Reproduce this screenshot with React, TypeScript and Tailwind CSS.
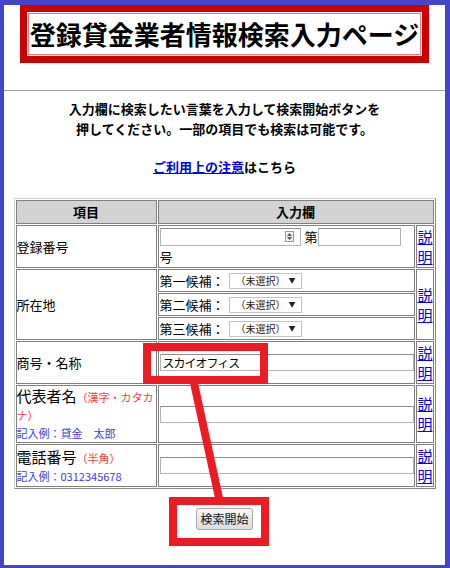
import React from "react";

const jp = "font-['Noto_Sans_CJK_JP','Noto_Sans',sans-serif]";

function TextBox({ value, w }: { value?: string; w: string }) {
  return (
    <span
      className={`flex h-[17px] shrink-0 items-center border border-[#b4b4b4] border-t-[#8c8c8c] bg-white pl-[2px] text-[12px] leading-none tracking-[-1px] text-black ${w}`}
    >
      {value}
    </span>
  );
}

function Select() {
  return (
    <span className="ml-[4px] flex h-[16px] w-[73px] items-center justify-between border border-[#c4c4c4] bg-white pl-[6px] pr-[5px] text-[10px] leading-none text-[#222]">
      <span>（未選択）</span>
      <span className="text-[7px]">▼</span>
    </span>
  );
}

function Info({ rows }: { rows?: number }) {
  return (
    <td
      rowSpan={rows}
      className="border border-[#808080] p-0 text-center align-middle text-[15px] leading-[20px]"
    >
      <a href="#" className="text-[#0000ee] underline">
        説<br />明
      </a>
    </td>
  );
}

const cell = "border border-[#808080] p-0 align-middle";

// one fixed-height line inside a label cell
function Line({ children }: { children: React.ReactNode }) {
  return <div className="h-[19px] whitespace-nowrap leading-[19px]">{children}</div>;
}

function Pref({ label }: { label: string }) {
  return (
    <td className={`${cell} h-[23px] px-[1px]`}>
      <div className="flex h-[21px] items-center leading-none">
        {label}
        <Select />
      </div>
    </td>
  );
}

export default function App() {
  return (
    <div className={`relative h-[568px] w-[450px] overflow-hidden bg-white ${jp}`}>
      <div className="h-[568px] w-[450px] border-b-[3px] border-l-4 border-r-[5px] border-t-[5px] border-[#4444cc] bg-white text-black">
        {/* title */}
        <div className="mx-auto w-[409px] border-[7px] border-[#cc0000] bg-white p-[1px]">
          <div className="border border-[#e48282] text-center text-[26px] font-bold leading-[40px] whitespace-nowrap">
            登録貸金業者情報検索入力ページ
          </div>
        </div>

        <hr className="mt-[27px] border-t border-[#a0a0a0]" />

        <p className="mt-[8px] text-center text-[13px] font-bold leading-[20px]">
          入力欄に検索したい言葉を入力して検索開始ボタンを
          <br />
          押してください。一部の項目でも検索は可能です。
        </p>
        <p className="mt-[18px] text-center text-[13px] font-bold leading-[20px]">
          <a href="#" className="text-[#0000ee] underline">
            ご利用上の注意
          </a>
          はこちら
        </p>

        {/* search table */}
        <table className="mx-auto mt-[21px] w-[422px] table-fixed border-separate border-spacing-[1px] border border-[#8a8a8a] border-l-[#d0d0d0] border-t-[#d0d0d0] text-[13px]">
          <colgroup>
            <col className="w-[141px]" />
            <col />
            <col className="w-[17px]" />
          </colgroup>
          <tbody>
            <tr>
              <th className={`${cell} h-[24px] bg-[#d3d3d3] font-bold leading-[20px]`}>項目</th>
              <th colSpan={2} className={`${cell} bg-[#d3d3d3] font-bold leading-[20px]`}>
                入力欄
              </th>
            </tr>
            <tr>
              <td className={`${cell} h-[43px] leading-[20px]`}>登録番号</td>
              <td className={`${cell} px-[1px]`}>
                <div className="flex h-[20px] items-center leading-none">
                  <span className="flex h-[18px] w-[141px] items-center justify-end border border-[#b4b4b4] border-t-[#8c8c8c] bg-white pr-[6px]">
                    <span className="flex h-[11px] w-[9px] flex-col items-center justify-center gap-[1px] border border-[#9a9a9a] bg-[#f0f0f0]">
                      <svg width="5" height="3" viewBox="0 0 5 3">
                        <path d="M0 3 L2.5 0 L5 3 Z" fill="#555" />
                      </svg>
                      <svg width="5" height="3" viewBox="0 0 5 3">
                        <path d="M0 0 L2.5 3 L5 0 Z" fill="#555" />
                      </svg>
                    </span>
                  </span>
                  <span className="ml-[4px]">第</span>
                  <TextBox w="w-[83px] h-[18px]" />
                </div>
                <div className="h-[20px] leading-[20px]">号</div>
              </td>
              <Info />
            </tr>
            <tr>
              <td rowSpan={3} className={`${cell} leading-[20px]`}>
                所在地
              </td>
              <Pref label="第一候補：" />
              <Info rows={3} />
            </tr>
            <tr>
              <Pref label="第二候補：" />
            </tr>
            <tr>
              <Pref label="第三候補：" />
            </tr>
            <tr>
              <td className={`${cell} h-[43px] leading-[20px]`}>商号・名称</td>
              <td className={`${cell} px-[1px]`}>
                <TextBox value="スカイオフィス" w="w-[254px]" />
              </td>
              <Info />
            </tr>
            <tr>
              <td className={`${cell} h-[58px]`}>
                <Line>
                  <span className="text-[15px]">代表者名</span>
                  <span className="text-[11px] text-[#ff3c3c]">（漢字・カタカ</span>
                </Line>
                <Line>
                  <span className="text-[11px] text-[#ff3c3c]">ナ）</span>
                </Line>
                <div className="h-[18px] leading-[18px] text-[11px] text-[#3c3cf0]">記入例：貸金　太郎</div>
              </td>
              <td className={`${cell} px-[1px]`}>
                <TextBox w="w-[254px]" />
              </td>
              <Info />
            </tr>
            <tr>
              <td className={`${cell} h-[43px]`}>
                <Line>
                  <span className="text-[15px]">電話番号</span>
                  <span className="text-[11px] text-[#ff3c3c]">（半角）</span>
                </Line>
                <Line>
                  <span className="text-[11px] text-[#3c3cf0]">記入例：0312345678</span>
                </Line>
              </td>
              <td className={`${cell} px-[1px]`}>
                <TextBox w="w-[254px]" />
              </td>
              <Info />
            </tr>
          </tbody>
        </table>

        <div className="flex justify-center pt-[19px]">
          <button className="h-[22px] w-[57px] rounded-[3px] border border-[#a8a8a8] bg-gradient-to-b from-[#f7f7f7] to-[#dcdcdc] text-[12px] leading-none text-[#111]">
            検索開始
          </button>
        </div>
      </div>

      {/* red annotation marks */}
      <svg className="pointer-events-none absolute left-0 top-0" width="450" height="568" viewBox="0 0 450 568">
        <rect x="147" y="347" width="117" height="33" fill="none" stroke="#ed1c24" strokeWidth="8" />
        <line x1="194" y1="383" x2="219" y2="498" stroke="#ed1c24" strokeWidth="8" />
        <rect x="173" y="501" width="92" height="41" fill="none" stroke="#ed1c24" strokeWidth="8" />
      </svg>
    </div>
  );
}
